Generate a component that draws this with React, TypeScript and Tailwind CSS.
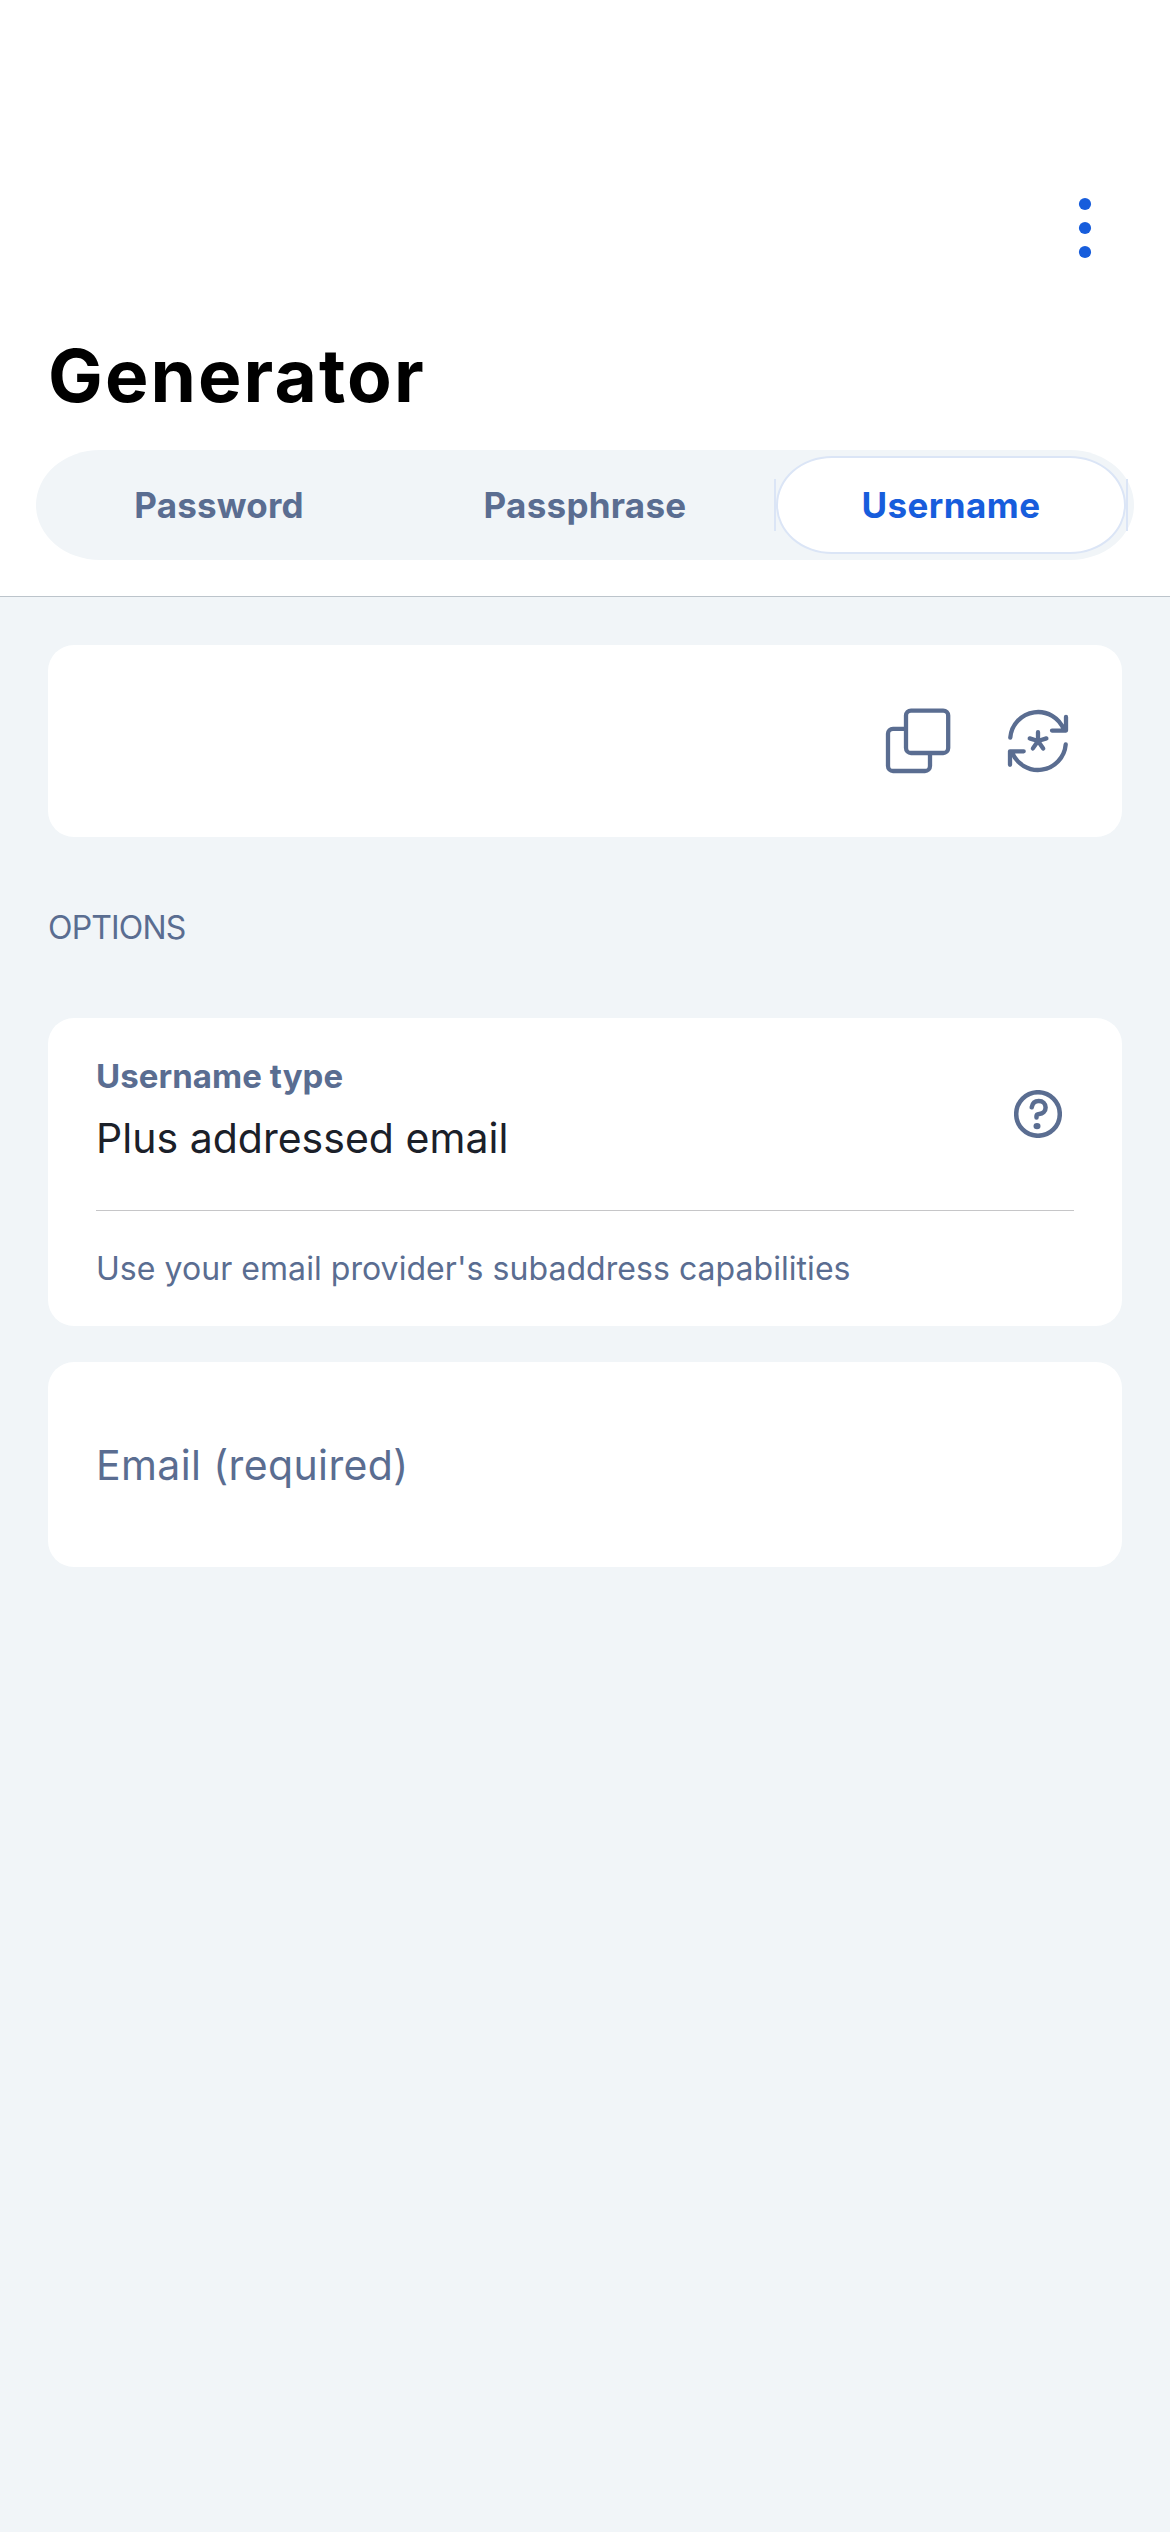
import type { ReactNode } from "react";

function Card({ className, children }: { className: string; children?: ReactNode }) {
  return <section className={`rounded-[26px] bg-white ${className}`}>{children}</section>;
}

function MoreIcon() {
  return (
    <svg width="14" height="62" viewBox="0 0 14 62" fill="#175ddc">
      <circle cx="7" cy="7" r="6.1" />
      <circle cx="7" cy="31" r="6.1" />
      <circle cx="7" cy="55" r="6.1" />
    </svg>
  );
}

function CopyIcon() {
  return (
    <svg width="72" height="72" viewBox="882 705 72 72" fill="none" stroke="#5a6d91" strokeWidth="4.3">
      <path d="M905 728.8H893a5 5 0 0 0-5 5V766a5 5 0 0 0 5 5h32a5 5 0 0 0 5-5V753" />
      <rect x="906" y="710.6" width="42.2" height="42.4" rx="5" />
    </svg>
  );
}

function GenerateIcon() {
  return (
    <svg
      width="72"
      height="72"
      viewBox="1002 705 72 72"
      fill="none"
      stroke="#5a6d91"
      strokeWidth="4.3"
      strokeLinecap="round"
      strokeLinejoin="round"
    >
      <path d="M1010.3 737.5A27.8 27.8 0 0 1 1064 730M1066 717V730.6H1052" />
      <path d="M1065.7 744.5A27.8 27.8 0 0 1 1012 752M1010 764.8V751.3H1023.7" />
      <path d="M1038 741V732.2M1038 741L1029.7 738.4M1038 741L1046.4 738.4M1038 741L1032.9 748.4M1038 741L1043.2 748.4" />
    </svg>
  );
}

function HelpIcon() {
  return (
    <svg width="48" height="48" viewBox="1014 1090 48 48" fill="none" stroke="#5a6d91" strokeWidth="4.5" strokeLinecap="round" strokeLinejoin="round">
      <circle cx="1038" cy="1114" r="21.8" />
      <path d="M1031.7 1107.3C1032.4 1103.4 1035.2 1101 1038.8 1101C1042.8 1101 1045.6 1103.8 1045.6 1107.5C1045.6 1111.5 1042.7 1113.6 1039.2 1113.9C1037.3 1114.1 1036.5 1114.6 1036.5 1116V1117.6" />
      <ellipse cx="1037" cy="1126.1" rx="3.5" ry="3.2" fill="#5a6d91" stroke="none" />
    </svg>
  );
}

export default function App() {
  return (
    <main className="flex h-[2532px] w-[1170px] flex-col overflow-hidden bg-[#f1f5f8] font-['Inter',sans-serif] text-[#5a6d91]">
      <header className="flex h-[597px] flex-col border-b border-[#bcc4cb] bg-white px-9 pt-[197px]">
        <div className="flex justify-end pr-[42px]">
          <button aria-label="More options">
            <MoreIcon />
          </button>
        </div>
        <h1 className="mt-[81px] pl-3 text-[73px] leading-[72px] font-bold tracking-[2.1px] text-black">Generator</h1>
        <nav className="mt-[38px] grid h-[110px] grid-cols-3 gap-3 rounded-[64px/55px] bg-[#f1f5f8] p-1.5 text-[35px] leading-[40px] font-bold">
          <button className="tracking-[0.2px]">Password</button>
          <button className="tracking-[0.26px]">Passphrase</button>
          <button className="relative flex px-[2px] tracking-[0.46px] text-[#175ddc]">
            <span className="absolute top-[23px] left-0 h-[52px] w-[2px] bg-[#dbe5f6]" />
            <span className="flex h-full flex-1 items-center justify-center rounded-[56px/49px] border-2 border-[#dbe5f6] bg-white">
              Username
            </span>
            <span className="absolute top-[23px] right-0 h-[52px] w-[2px] bg-[#dbe5f6]" />
          </button>
        </nav>
      </header>

      <div className="flex flex-col px-12 pt-12">
        <Card className="flex h-48 items-center justify-end gap-12 pr-12">
          <button aria-label="Copy">
            <CopyIcon />
          </button>
          <button aria-label="Generate">
            <GenerateIcon />
          </button>
        </Card>

        <h2 className="flex h-[181px] items-center text-[32px] leading-[40px] tracking-[-0.84px]">OPTIONS</h2>

        <Card className="h-[308px] px-12">
          <div className="flex h-48 items-start justify-between pt-[38px]">
            <div>
              <div className="text-[33px] leading-[40px] font-bold tracking-[0.06px]">Username type</div>
              <div className="mt-[18px] text-[41px] leading-[48px] tracking-[0.02px] text-[#1b2029]">Plus addressed email</div>
            </div>
            <button aria-label="Help" className="mt-[34px] mr-3">
              <HelpIcon />
            </button>
          </div>
          <div className="h-px bg-[#c6c6c8]" />
          <p className="flex h-[115px] items-center text-[32px] leading-[40px] tracking-[0.05px]">
            Use your email provider's subaddress capabilities
          </p>
        </Card>

        <Card className="mt-9 flex h-[205px] items-center px-12">
          <label className="text-[41px] leading-[48px] tracking-[0.38px]">Email (required)</label>
        </Card>
      </div>
    </main>
  );
}
